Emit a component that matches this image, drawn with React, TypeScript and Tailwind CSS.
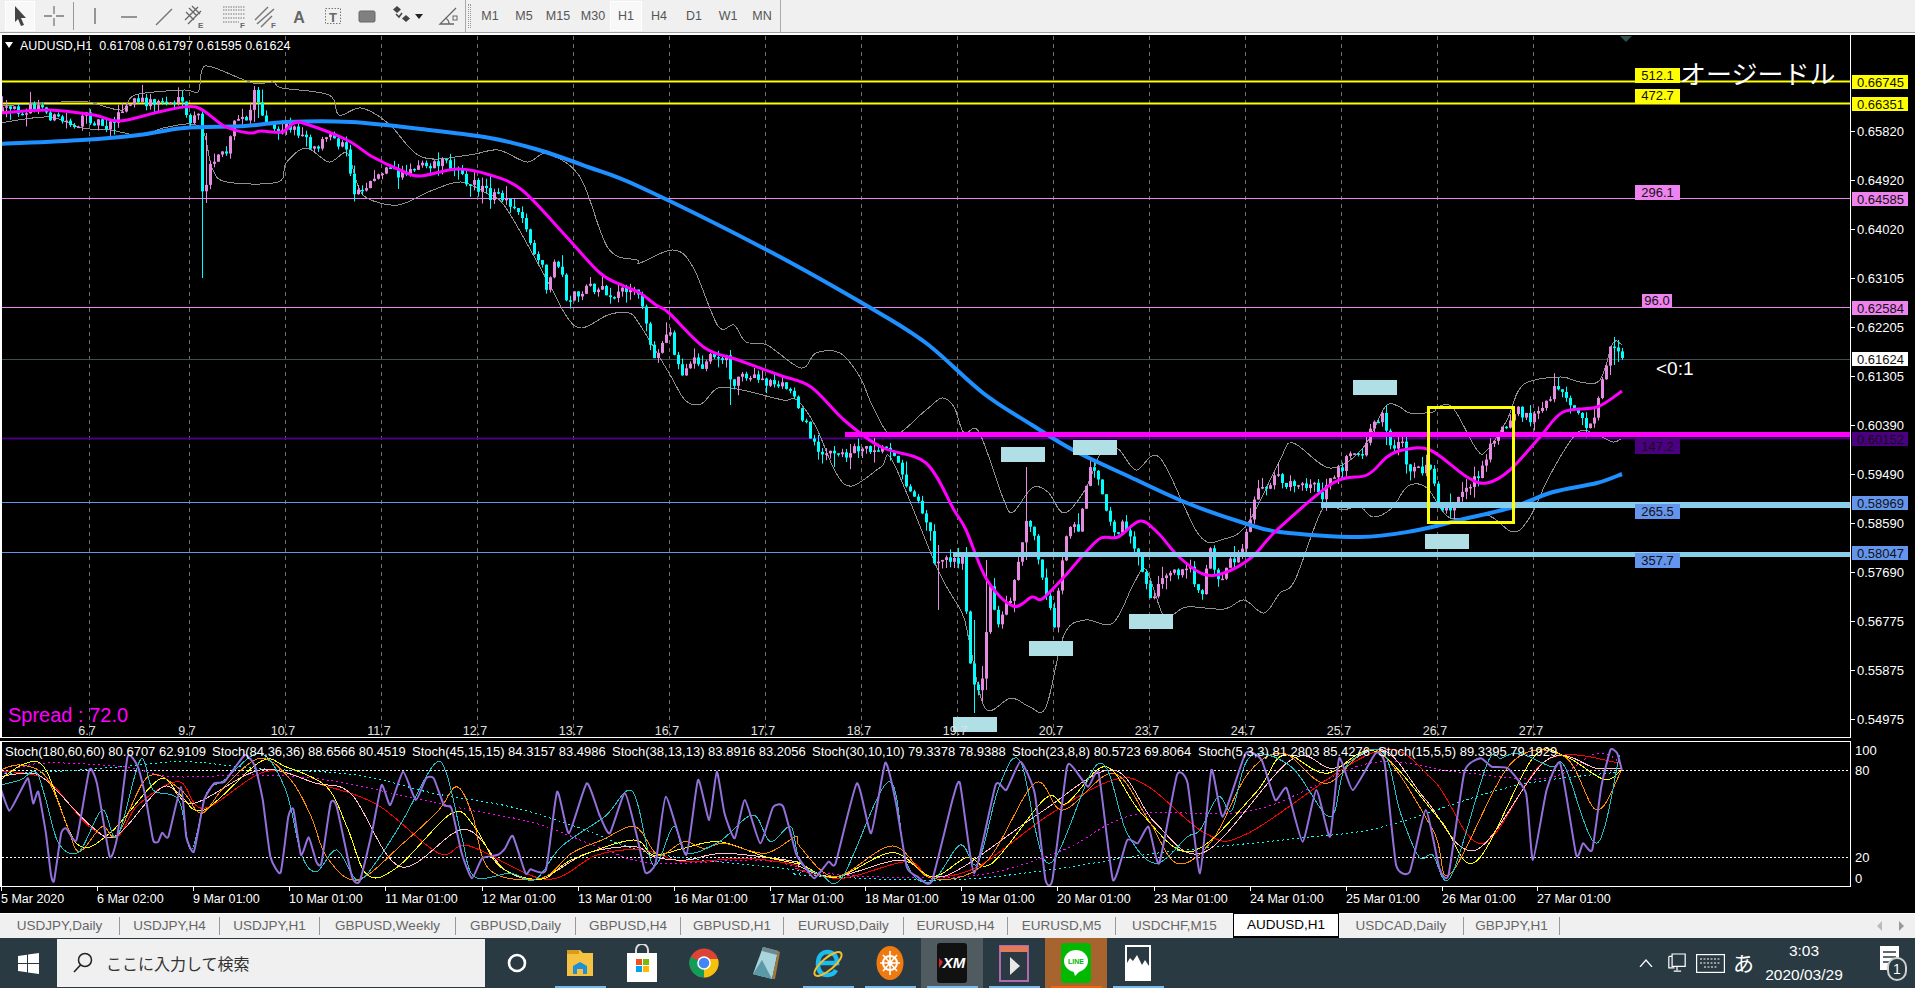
import React from "react";

type P = [number, number];
const z3 = (a: number[]): P[] => { const r: P[] = []; for (let i = 0; i < a.length; i += 2) r.push([a[i] / 1.96, 720 + a[i + 1] / 3]); return r; };
const z4 = (a: number[]): P[] => { const r: P[] = []; for (let i = 0; i < a.length; i += 2) r.push([800 + a[i] / 1.406, 720 + a[i + 1] / 3]); return r; };
const z8 = (a: number[]): P[] => { const r: P[] = []; for (let i = 0; i < a.length; i += 2) r.push([1200 + a[i] / 2.193, 730 + a[i + 1] / 3]); return r; };
const seq = (a: number[]): P[] => { const r: P[] = []; for (let i = 0; i < a.length; i += 2) r.push([a[i], a[i + 1]]); return r; };

const smooth = (p: P[], k = 6) => {
  let d = `M${p[0][0].toFixed(1)} ${p[0][1].toFixed(1)}`;
  for (let i = 0; i < p.length - 1; i++) {
    const a = p[Math.max(0, i - 1)], b = p[i], c = p[i + 1], e = p[Math.min(p.length - 1, i + 2)];
    const c1: P = [b[0] + (c[0] - a[0]) / k, b[1] + (c[1] - a[1]) / k];
    const c2: P = [c[0] - (e[0] - b[0]) / k, c[1] - (e[1] - b[1]) / k];
    d += `C${c1[0].toFixed(1)} ${c1[1].toFixed(1)} ${c2[0].toFixed(1)} ${c2[1].toFixed(1)} ${c[0].toFixed(1)} ${c[1].toFixed(1)}`;
  }
  return d;
};

const pricePath: P[] = seq([0,112,40,107,53,118,78,125,86,117,106,125,122,112,131,102,180,102,188,122,198,117,202,193,212,163,227,150,231,127,249,118,254,92,258,103,265,120,278,130,286,120,298,137,314,147,331,137,347,152,353,190,367,185,384,173,408,172,420,165,449,163,465,180,490,195,514,203,527,227,533,257,543,270,547,297,555,257,565,287,567,320,571,297,588,287,612,293,640,293,652,360,669,327,681,383,693,357,703,373,709,357,726,360,730,383,746,373,762,383,779,383,795,397,811,440,824,453,840,457,856,447,877,447,893,447,901,477,918,497,930,533,934,560,950,560,962,560,969,650,973,687,983,683,989,583,997,623,1009,600,1018,567,1024,523,1034,537,1042,577,1054,627,1060,567,1069,527,1079,527,1085,483,1091,470,1099,483,1107,510,1115,537,1122,517,1134,547,1150,600,1160,583,1187,567,1205,597,1207,537,1218,580,1228,563,1238,560,1250,517,1260,487,1277,477,1297,490,1313,483,1322,497,1333,477,1347,460,1365,450,1370,430,1382,415,1390,447,1402,447,1405,467,1427,468,1437,483,1438,503,1450,510,1457,497,1467,487,1473,480,1487,460,1493,437,1507,423,1517,407,1530,423,1543,407,1557,387,1567,400,1578,410,1588,433,1593,417,1602,377,1608,352,1613,345,1622,358]);
const maPink: P[] = seq([0,113,49,110,94,115,120,121,163,111,196,107,224,126,249,133,261,131,282,132,294,123,306,124,347,140,371,156,400,170,420,176,457,169,490,175,522,190,563,233,600,273,624,286,640,293,656,305,669,313,705,348,738,360,779,375,811,387,844,420,881,447,926,463,954,510,966,530,987,580,1013,606,1032,597,1042,599,1064,577,1085,553,1101,538,1118,537,1140,521,1158,533,1179,557,1203,574,1224,573,1252,557,1277,530,1333,483,1367,475,1387,457,1403,450,1430,450,1467,477,1487,483,1510,470,1540,437,1563,412,1597,407,1622,391]);
const maBlue: P[] = seq([0,144,82,140,139,135,184,128,245,126,286,122,351,122,429,130,490,138,539,150,588,167,640,187,767,250,869,307,926,343,983,393,1032,425,1073,450,1130,477,1187,503,1244,523,1280,532,1360,537,1413,531,1460,520,1513,507,1553,492,1597,483,1622,474]);
const bbUp: P[] = seq([0,106,61,102,88,102,122,110,135,95,184,90,198,92,202,70,212,67,253,83,273,82,282,88,329,95,339,115,361,108,388,123,422,157,469,155,498,150,527,162,547,154,580,177,608,248,637,260,640,263,673,250,693,267,718,326,734,325,746,342,767,345,801,368,816,353,840,353,860,377,873,407,893,435,926,410,942,398,954,407,964,433,979,432,1003,498,1013,512,1032,488,1048,492,1064,513,1085,490,1101,453,1118,449,1136,470,1160,458,1199,535,1224,539,1248,523,1280,460,1293,443,1330,468,1363,448,1385,407,1398,406,1410,413,1433,412,1438,407,1453,408,1477,450,1487,450,1507,420,1523,385,1560,377,1580,382,1600,380,1613,343,1622,345]);
const bbLo: P[] = seq([0,123,49,117,82,128,110,130,143,136,163,128,200,127,212,168,227,182,278,182,286,163,306,148,329,162,347,153,357,183,367,198,398,205,433,190,461,182,486,193,506,208,547,280,567,317,582,328,608,315,629,313,640,325,669,373,685,400,701,404,718,388,742,390,783,400,797,400,816,427,836,473,852,486,881,467,893,462,938,570,962,613,969,640,985,708,1011,698,1030,707,1046,707,1064,635,1085,620,1113,623,1134,583,1146,570,1162,613,1171,616,1187,607,1224,609,1244,600,1264,613,1280,593,1295,580,1323,508,1342,510,1360,507,1373,517,1392,508,1408,486,1427,488,1450,518,1487,515,1513,532,1530,517,1550,475,1577,433,1597,435,1613,442,1621,439]);

const interp = (p: P[], x: number) => {
  for (let i = 0; i < p.length - 1; i++) if (x >= p[i][0] && x <= p[i + 1][0]) {
    const d = p[i + 1][0] - p[i][0];
    return d === 0 ? p[i + 1][1] : p[i][1] + ((x - p[i][0]) / d) * (p[i + 1][1] - p[i][1]);
  }
  return p[p.length - 1][1];
};
let seed = 12345;
const rnd = () => { seed = (seed * 16807) % 2147483647; return seed / 2147483647; };
const wickOver: Record<number, [number, number]> = {
  202: [111, 278], 206: [133, 203], 254: [86, 122], 258: [87, 118], 730: [350, 405], 938: [545, 610], 974: [620, 713], 986: [560, 690], 1026: [467, 560], 1386: [405, 445], 1618: [340, 362], 1622: [348, 360], 1614: [337, 365],
};
type C = { x: number; o: number; c: number; h: number; l: number };
const candles: C[] = (() => {
  const out: C[] = [];
  let prev = 112;
  for (let i = 0; i <= 405; i++) {
    const x = 2 + 4 * i;
    const base = interp(pricePath, x);
    const c = i === 405 ? 358 : base + (rnd() - 0.5) * 11;
    const o = prev;
    const over = wickOver[x];
    const h = over ? over[0] : Math.min(o, c) - rnd() * rnd() * 14;
    const l = over ? over[1] : Math.max(o, c) + rnd() * rnd() * 14;
    out.push({ x, o, c, h, l });
    prev = c;
  }
  return out;
})();

const purple: P[] = [...z3([0,200,18,272,38,220,55,175,65,250,75,215,90,340,100,465,106,482,120,340,130,325,150,360,175,150,190,190,215,410,230,350,250,110,270,140,285,230,300,360,310,365,318,338,330,350,355,200,365,350,380,395,400,240,420,190,440,185,480,105,500,140,515,240,530,410,550,458,565,290,575,268,590,405,605,352,620,425,630,430,648,250,660,260,690,470,705,483,730,330,748,195,765,255,790,155,815,240,835,175,850,175,870,255,885,265,905,400,925,475,945,415,975,405,990,385,1005,348,1030,460,1040,448,1070,450,1092,215,1115,340,1150,190,1175,285,1195,340,1225,220,1250,360,1265,458,1285,430,1305,230,1345,405,1368,180,1390,300,1405,155,1420,280,1440,355,1460,240,1490,370,1515,262,1535,260,1560,400]),
  ...z4([0,420,20,475,40,425,50,430,80,190,100,340,120,128,135,250,150,440,165,470,185,485,215,235,225,190,245,460,275,195,290,210,310,125,330,220,345,478,355,478,375,145,385,145,405,200,420,160,440,480,460,360,475,370,490,320,505,430,530,165,545,190]),
  ...z8([0,430,25,120,50,260,100,70,135,90,165,210,190,175,225,335,255,180,285,320,305,85,335,180,385,70,405,100,430,405,460,425,495,240,525,415,545,435,580,125,615,85,640,110,675,115,715,190,730,390,760,180,790,100,825,375,840,340,860,360,880,170,900,60,915,70,925,120])];
const cyan: P[] = [...z3([0,195,40,180,70,155,90,240,115,370,155,395,200,270,230,350,275,120,300,210,350,240,375,390,405,220,440,180,510,100,560,210,590,400,620,455,660,390,700,480,740,420,790,300,850,135,875,160,905,350,930,470,1000,460,1050,478,1100,380,1185,290,1240,215,1280,435,1320,320,1345,400,1410,365,1475,285,1510,365,1550,320]),
  ...z4([0,425,30,465,60,470,125,185,150,430,185,485,225,375,250,430,280,200,310,125,350,430,420,130,460,340,500,430,545,350]),
  ...z8([0,300,40,200,70,240,110,80,200,110,285,260,320,110,400,65,440,250,480,380,510,375,550,440,630,100,660,85,700,70,770,110,800,110,870,340,920,75])];
const orange: P[] = [...z3([0,150,40,135,90,170,130,310,155,395,200,320,230,345,290,170,355,210,395,280,440,200,510,115,570,180,610,290,640,410,700,480,790,370,860,270,895,200,925,280,960,450,1060,475,1120,400,1180,360,1245,320,1290,405,1340,365,1380,385,1420,370,1500,400,1560,350]),
  ...z4([0,380,50,470,130,378,185,475,260,430,330,190,370,270,440,160,490,300,530,430,580,360,630,160,680,100,740,190,810,90,890,330,915,460,1000,130,1075,110,1120,270,1155,150])];
const yellow: P[] = [...z3([0,180,50,130,90,150,150,370,215,340,310,180,350,220,400,270,510,125,560,140,640,200,680,320,720,465,780,440,885,280,930,320,980,440,1060,478,1120,420,1240,360,1280,405,1340,385,1410,365,1500,410,1560,430]),
  ...z4([0,430,50,472,130,398,185,470,235,412,270,430,345,235,375,250,430,140,480,280,550,395,640,220,680,105,740,160,810,95,900,300,950,425,1030,115,1075,108,1130,178,1155,150])];
const pink: P[] = [...z3([0,170,50,160,90,180,180,320,230,345,320,200,380,250,510,150,620,190,690,225,785,440,910,328,990,450,1060,475,1150,400,1245,380,1280,410,1345,420,1420,400,1560,425]),
  ...z4([0,440,50,470,140,420,185,470,230,440,340,275,440,150,500,310,570,395,690,120,750,145,820,90,880,240,950,390,1050,120,1120,145,1155,145])];
const red: P[] = [...z3([0,155,50,160,100,190,175,320,230,350,270,255,350,185,400,265,520,155,620,190,740,255,860,400,920,378,1070,478,1170,405,1260,390,1340,425,1460,415,1560,435]),
  ...z4([0,450,60,475,150,425,185,470,250,440,350,285,440,180,490,200,570,340,630,340,810,95,890,180,960,370,1050,120,1155,130])];
const dashMag: P[] = [...z3([0,165,80,130,240,140,340,170,500,165,640,180,800,230,920,270,1050,310,1180,385,1280,430,1480,420,1560,440]),
  ...z4([0,450,100,470,250,465,370,390,470,285,640,270,800,130,920,155,1050,175,1120,100,1155,130])];
const dashCyan: P[] = [...z3([0,160,100,155,240,140,360,125,500,145,700,165,850,220,1000,260,1130,320,1280,400,1560,450]),
  ...z4([0,465,200,480,350,450,500,400,700,355,820,320,1000,200,1155,155])];

const verticals = [89, 189, 285, 381, 477, 573, 669, 765, 861, 957, 1053, 1149, 1245, 1341, 1437, 1533];
const dayLabels = ["6.7", "9.7", "10.7", "11.7", "12.7", "13.7", "16.7", "17.7", "18.7", "19.7", "20.7", "23.7", "24.7", "25.7", "26.7", "27.7"];
const axisTicks: [string, number][] = [["0.65820", 131], ["0.64920", 180], ["0.64020", 229], ["0.63105", 278], ["0.62205", 327], ["0.61305", 376], ["0.60390", 425], ["0.59490", 474], ["0.58590", 523], ["0.57690", 572], ["0.56775", 621], ["0.55875", 670], ["0.54975", 719]];
const axisBoxes: [string, number, string][] = [["0.66745", 82, "#ffff00"], ["0.66351", 104, "#ffff00"], ["0.64585", 199, "#ee82ee"], ["0.62584", 308, "#ee82ee"], ["0.61624", 359, "#ffffff"], ["0.60152", 439, "#4b0082"], ["0.58969", 503, "#6495ed"], ["0.58047", 553, "#6495ed"]];
const chartBoxes: [string, number, number, number, number, string][] = [["512.1", 1635, 68, 45, 15, "#ffff00"], ["472.7", 1635, 89, 45, 14, "#ffff00"], ["296.1", 1635, 185, 45, 15, "#ee82ee"], ["96.0", 1642, 294, 30, 14, "#ee82ee"], ["147.2", 1635, 439, 45, 15, "#4b0082"], ["265.5", 1635, 504, 45, 15, "#6495ed"], ["357.7", 1635, 553, 45, 15, "#6495ed"]];
const paleBoxes: P[] = [[1001, 447], [1073, 440], [1129, 614], [1029, 641], [953, 717], [1353, 380], [1425, 534]];
const hLines: [number, string, number][] = [[81, "#ffff00", 2], [103, "#ffff00", 2], [198, "#ee82ee", 1], [307, "#ee82ee", 1], [359, "#3d5050", 1], [438, "#4b0082", 2], [502, "#6495ed", 1], [552, "#6495ed", 1]];
const stochHead: [number, string][] = [[5, "Stoch(180,60,60) 80.6707 62.9109"], [212, "Stoch(84,36,36) 88.6566 80.4519"], [412, "Stoch(45,15,15) 84.3157 83.4986"], [612, "Stoch(38,13,13) 83.8916 83.2056"], [812, "Stoch(30,10,10) 79.3378 78.9388"], [1012, "Stoch(23,8,8) 80.5723 69.8064"], [1198, "Stoch(5,3,3) 81.2803 85.4276"], [1378, "Stoch(15,5,5) 89.3395 79.1929"]];
const timeLabels: [number, string][] = [[0, "5 Mar 2020"], [96, "6 Mar 02:00"], [192, "9 Mar 01:00"], [288, "10 Mar 01:00"], [384, "11 Mar 01:00"], [481, "12 Mar 01:00"], [577, "13 Mar 01:00"], [673, "16 Mar 01:00"], [769, "17 Mar 01:00"], [864, "18 Mar 01:00"], [960, "19 Mar 01:00"], [1056, "20 Mar 01:00"], [1153, "23 Mar 01:00"], [1249, "24 Mar 01:00"], [1345, "25 Mar 01:00"], [1441, "26 Mar 01:00"], [1536, "27 Mar 01:00"]];

function MainChart() {
  return (
    <svg width={1915} height={703} viewBox="0 35 1915 703" className="block flex-none" fontFamily="'Liberation Sans', 'Noto Sans CJK JP', sans-serif">
      <rect x={0} y={35} width={1915} height={703} fill="#000" />
      {verticals.map((x) => <line key={x} x1={x + 0.5} x2={x + 0.5} y1={36} y2={738} stroke="#6e6e6e" strokeDasharray="4 4" />)}
      <polygon points="1620,36 1632,36 1626,42" fill="#2f5050" />
      {hLines.map(([y, c, w]) => <line key={y} x1={2} x2={1851} y1={y + 0.5} y2={y + 0.5} stroke={c} strokeWidth={w} />)}
      <path d={smooth(bbUp)} fill="none" stroke="#909090" strokeWidth={1} shapeRendering="crispEdges" />
      <path d={smooth(bbLo)} fill="none" stroke="#909090" strokeWidth={1} shapeRendering="crispEdges" />
      {candles.map((k) => {
        const up = k.c < k.o;
        const col = up ? "#e58be0" : "#00ffff";
        const top = Math.min(k.o, k.c);
        const h = Math.max(1.5, Math.abs(k.o - k.c));
        return (
          <g key={k.x}>
            <rect x={k.x} y={k.h} width={1} height={k.l - k.h} fill={col} />
            <rect x={k.x - 1} y={top} width={3} height={h} fill={col} />
          </g>
        );
      })}
      <path d={smooth(maBlue)} fill="none" stroke="#1e90ff" strokeWidth={4} />
      <path d={smooth(maPink)} fill="none" stroke="#ff00ff" strokeWidth={3} />
      <rect x={845} y={432} width={1006} height={5} fill="#ff00ff" />
      <rect x={1321} y={502} width={530} height={6} fill="#87ceeb" />
      <rect x={953} y={552} width={898} height={5} fill="#87ceeb" />
      <rect x={1428.5} y={407.5} width={85} height={115} fill="none" stroke="#ffff00" strokeWidth={3} />
      {paleBoxes.map(([x, y]) => <rect key={x} x={x} y={y} width={44} height={15} fill="#b0e0e6" />)}
      {chartBoxes.map(([t, x, y, w, h, c]) => (
        <g key={t}>
          <rect x={x} y={y} width={w} height={h} fill={c} />
          <text x={x + w / 2} y={y + h - 3} textAnchor="middle" fontSize={13} fill="#111">{t}</text>
        </g>
      ))}
      <polygon points="5,42 13,42 9,48" fill="#fff" />
      <text x={20} y={50} fontSize={12.5} fill="#fff" xmlSpace="preserve">AUDUSD,H1  0.61708 0.61797 0.61595 0.61624</text>
      <text x={1680} y={84} fontSize={26} fill="#fff">オージードル</text>
      <text x={1656} y={375} fontSize={19} fill="#fff">&lt;0:1</text>
      <text x={8} y={722} fontSize={20} fill="#ff00ff">Spread : 72.0</text>
      {dayLabels.map((t, i) => <text key={t} x={verticals[i] - 2} y={735} textAnchor="middle" fontSize={12.5} fill="#e0e0e0">{t}</text>)}
      <rect x={0} y={35} width={2} height={703} fill="#fff" />
      <rect x={1850} y={35} width={1} height={703} fill="#fff" />
      <rect x={0} y={737} width={1851} height={1} fill="#fff" />
      {axisTicks.map(([t, y]) => (
        <g key={t}>
          <rect x={1851} y={y} width={4} height={1} fill="#fff" />
          <text x={1857} y={y + 5} fontSize={13} fill="#fff">{t}</text>
        </g>
      ))}
      {axisBoxes.map(([t, y, c]) => (
        <g key={t}>
          <rect x={1852} y={y - 7} width={56} height={14} fill={c} />
          <text x={1857} y={y + 5} fontSize={13} fill="#111">{t}</text>
        </g>
      ))}
    </svg>
  );
}

function StochChart() {
  return (
    <svg width={1915} height={146} viewBox="0 741 1915 146" className="block flex-none" fontFamily="'Liberation Sans', sans-serif">
      <rect x={0} y={741} width={1915} height={146} fill="#000" />
      <line x1={2} x2={1850} y1={770.5} y2={770.5} stroke="#fff" strokeDasharray="2 2" />
      <line x1={2} x2={1850} y1={857.5} y2={857.5} stroke="#fff" strokeDasharray="2 2" />
      <g fill="none" shapeRendering="crispEdges">
        <path d={smooth(dashCyan)} stroke="#00ffff" strokeDasharray="2 3" />
        <path d={smooth(dashMag)} stroke="#ff00ff" strokeDasharray="2 3" />
        <path d={smooth(red)} stroke="#ff0000" />
        <path d={smooth(pink)} stroke="#ffc0cb" />
        <path d={smooth(yellow)} stroke="#ffff00" />
        <path d={smooth(orange)} stroke="#ff8c00" />
        <path d={smooth(cyan)} stroke="#20c0c8" />
      </g>
      <path d={smooth(purple, 12)} fill="none" stroke="#9370db" strokeWidth={2} />
      {stochHead.map(([x, t]) => <text key={x} x={x} y={756} fontSize={13} fill="#fff">{t}</text>)}
      <rect x={0} y={741} width={1851} height={1} fill="#fff" />
      <rect x={0} y={741} width={2} height={146} fill="#fff" />
      <rect x={1850} y={741} width={1} height={146} fill="#fff" />
      <rect x={0} y={886} width={1851} height={1} fill="#fff" />
      <text x={1855} y={755} fontSize={13} fill="#fff">100</text>
      <text x={1855} y={775} fontSize={13} fill="#fff">80</text>
      <text x={1855} y={862} fontSize={13} fill="#fff">20</text>
      <text x={1855} y={883} fontSize={13} fill="#fff">0</text>
    </svg>
  );
}

function TimeAxis() {
  return (
    <svg width={1915} height={26} viewBox="0 887 1915 26" className="block flex-none" fontFamily="'Liberation Sans', sans-serif">
      <rect x={0} y={887} width={1915} height={26} fill="#000" />
      {timeLabels.map(([x, t]) => (
        <g key={x}>
          <rect x={x + 1} y={887} width={1} height={4} fill="#fff" />
          <text x={x + 1} y={903} fontSize={12.5} fill="#fff">{t}</text>
        </g>
      ))}
    </svg>
  );
}

const tools: { cls: string; el: React.ReactNode }[] = [
  { cls: "ml-[6px]", el: <line x1="15" y1="7" x2="15" y2="23" stroke="#777" strokeWidth="1.5" /> },
  { cls: "ml-[4px]", el: <line x1="7" y1="16" x2="23" y2="16" stroke="#777" strokeWidth="1.5" /> },
  { cls: "ml-[5px]", el: <line x1="7" y1="24" x2="23" y2="8" stroke="#777" strokeWidth="1.5" /> },
  { cls: "ml-[2px]", el: <g stroke="#666" strokeWidth="1.3" fill="none"><path d="M4 19L17 6M7 23L20 10M8 7l8 8M5 11l8 8M11 5l8 8" /><text x="17" y="27" fontSize="8" fontWeight="700" fill="#666" stroke="none" fontFamily="Liberation Sans">E</text></g> },
  { cls: "ml-[8px]", el: <g stroke="#777" strokeWidth="1"><g strokeDasharray="1.5 1"><line x1="4" y1="6" x2="26" y2="6" /><line x1="4" y1="9" x2="26" y2="9" /><line x1="4" y1="13" x2="26" y2="13" /><line x1="4" y1="17" x2="26" y2="17" /><line x1="4" y1="21" x2="20" y2="21" /></g><text x="21" y="27" fontSize="8" fontWeight="700" fill="#666" stroke="none" fontFamily="Liberation Sans">F</text></g> },
  { cls: "ml-[1px]", el: <g stroke="#777" strokeWidth="1.5"><line x1="5" y1="19" x2="18" y2="6" /><line x1="7" y1="23" x2="24" y2="8" /><line x1="11" y1="26" x2="22" y2="15" /><text x="21" y="27" fontSize="8" fontWeight="700" fill="#666" stroke="none" fontFamily="Liberation Sans">F</text></g> },
  { cls: "ml-[4px]", el: <text x="15" y="22" textAnchor="middle" fontSize="16" fontWeight="700" fill="#666" fontFamily="Liberation Sans">A</text> },
  { cls: "ml-[4px]", el: <g><rect x="7.5" y="7.5" width="15" height="15" fill="none" stroke="#777" strokeDasharray="1.5 1.5" /><text x="15" y="21" textAnchor="middle" fontSize="13" fontWeight="700" fill="#666" fontFamily="Liberation Sans">T</text></g> },
  { cls: "ml-[4px]", el: <rect x="7" y="10" width="16" height="11" rx="1.5" fill="#808080" stroke="#666" /> },
  { cls: "ml-[2px]", el: <g fill="#444"><path d="M13 5l4 3.500-4 3.500-4-3.500zM22 14l4 3.500-4 3.500-4-3.500z" /><path d="M12 13l3 3 3-4" stroke="#444" strokeWidth="1.5" fill="none" /></g> },
];
const frames: [string, string][] = [["M1", "w-[34px]"], ["M5", "w-[34px]"], ["M15", "w-[34px]"], ["M30", "w-[35px] pl-px"], ["H1", "w-[32px] bg-[#f8f8f8] border border-white"], ["H4", "w-[34px]"], ["D1", "w-[35px] pl-px"], ["W1", "w-[34px]"], ["MN", "w-[34px]"]];

function Toolbar() {
  return (
    <div className="h-[35px] flex-none bg-white">
      <div className="h-[33px] bg-[#f0f0f0] border-b border-[#a0a0a0] flex items-center">
        <div className="ml-[5px] w-[30px] h-[30px] flex items-center justify-center bg-[#f8f8f8] border border-white">
          <svg width="18" height="24" viewBox="0 0 18 24"><path d="M4 2l11 12h-5l3 7-3 1-3-7-3 3z" fill="#444" /></svg>
        </div>
        <div className="w-[38px] flex justify-center">
          <svg width="22" height="22" viewBox="0 0 22 22"><path d="M11 1v8M11 13v8M1 11h8M13 11h8" stroke="#777" strokeWidth="1.3" /></svg>
        </div>
        <div className="w-px h-[28px] bg-[#999]" />
        {tools.map((t, i) => (
          <div key={i} className={`w-[30px] h-[30px] flex-none ${t.cls}`}>
            <svg width="30" height="30" viewBox="0 0 30 30">{t.el}</svg>
          </div>
        ))}
        <div className="w-[10px] flex justify-center">
          <svg width="8" height="5" viewBox="0 0 8 5"><path d="M0 0h8L4 5z" fill="#222" /></svg>
        </div>
        <div className="ml-[8px] w-[30px] h-[30px] flex-none">
          <svg width="30" height="30" viewBox="0 0 30 30"><path d="M24 7L8 23h14M17 23c0-3-1-5-4-6" fill="none" stroke="#666" strokeWidth="1.3" /><rect x="21" y="15" width="4" height="4" fill="none" stroke="#666" /></svg>
        </div>
        <div className="ml-[3px] w-px h-[32px] bg-[#aaa]" />
        <div className="ml-[2px] w-[3px] h-[24px] border-x border-dotted border-[#999]" />
        <div className="ml-[2px] flex items-center h-full">
          {frames.map(([t, c]) => (
            <div key={t} className={`h-[30px] flex items-center justify-center text-[12.5px] text-[#555] ${c}`}>{t}</div>
          ))}
        </div>
        <div className="ml-px w-px h-full bg-[#aaa]" />
      </div>
    </div>
  );
}

const tabs: [string, string][] = [["USDJPY,Daily", "w-[120px]"], ["USDJPY,H4", "w-[100px]"], ["USDJPY,H1", "w-[100px]"], ["GBPUSD,Weekly", "w-[136px]"], ["GBPUSD,Daily", "w-[120px]"], ["GBPUSD,H4", "w-[105px]"], ["GBPUSD,H1", "w-[103px]"], ["EURUSD,Daily", "w-[120px]"], ["EURUSD,H4", "w-[104px]"], ["EURUSD,M5", "w-[108px]"], ["USDCHF,M15", "w-[117px] border-r-0"]];

function Tabs() {
  return (
    <div className="h-[25px] flex-none bg-[#f0f0f0] border-t border-white flex items-stretch text-[13.5px] text-[#666]">
      {tabs.map(([t, c]) => (
        <div key={t} className={`flex items-center justify-center my-[3px] border-r border-[#999] ${c}`}>{t}</div>
      ))}
      <div className="w-[106px] -mt-px bg-white border border-black border-b-2 flex items-center justify-center text-black">AUDUSD,H1</div>
      <div className="w-[125px] my-[3px] border-r border-[#999] flex items-center justify-center">USDCAD,Daily</div>
      <div className="w-[96px] my-[3px] border-r border-[#999] flex items-center justify-center">GBPJPY,H1</div>
      <div className="flex-1 flex items-center justify-end gap-[15px] pr-[11px]">
        <svg width="6" height="10" viewBox="0 0 6 10"><path d="M5 0v10L0 5z" fill="#bbb" /></svg>
        <svg width="6" height="10" viewBox="0 0 6 10"><path d="M1 0v10l5-5z" fill="#999" /></svg>
      </div>
    </div>
  );
}

const TaskIcons: { bg: string; bar: string; el: React.ReactNode }[] = [
  { bg: "", bar: "bg-[#76b9ed]", el: (
    <svg width="30" height="30" viewBox="0 0 30 30"><path d="M2 2h13l3 3h10v23H2z" fill="#f5c242" /><rect x="2" y="2" width="12" height="4" fill="#d99b1e" /><path d="M8 26v-8l7-4 7 4v8h-4v-5h-6v5z" fill="#1f8fd8" /></svg>) },
  { bg: "", bar: "", el: (
    <svg width="30" height="38" viewBox="0 0 30 38"><path d="M9 10V6a6 6 0 0 1 12 0v4" fill="none" stroke="#ddd" strokeWidth="2" /><rect y="9" width="30" height="29" fill="#fff" /><rect x="9" y="15" width="6" height="6" fill="#f25022" /><rect x="16" y="15" width="6" height="6" fill="#7fba00" /><rect x="9" y="22" width="6" height="6" fill="#00a4ef" /><rect x="16" y="22" width="6" height="6" fill="#ffb900" /></svg>) },
  { bg: "", bar: "", el: (
    <svg width="30" height="38" viewBox="0 0 30 38"><g transform="translate(0 4)"><circle cx="15" cy="15" r="14.5" fill="#db4437" /><path d="M15 15L2.4 22.3A14.5 14.5 0 0 0 15 29.5z" fill="#0f9d58" /><path d="M2.4 22.3A14.5 14.5 0 0 1 1.5 9L15 15z" fill="#0f9d58" /><path d="M15 29.5A14.5 14.5 0 0 0 29 11H15z" fill="#f4c20d" /><circle cx="15" cy="15" r="6.8" fill="#fff" /><circle cx="15" cy="15" r="5.3" fill="#4285f4" /></g></svg>) },
  { bg: "", bar: "", el: (
    <svg width="30" height="38" viewBox="0 0 30 38"><path d="M12 3l15 4-6 28L2 30z" fill="#a8d4dc" /><path d="M2 30l9-14 10 19z" fill="#5a9aa8" /><path d="M12 3l15 4-1 4-15-4z" fill="#6d8a92" /><path d="M21 35l6-28 2 1-5 27z" fill="#a07a3c" /></svg>) },
  { bg: "", bar: "bg-[#76b9ed]", el: (
    <svg width="32" height="38" viewBox="0 0 32 38"><path d="M6 19h19c0-7-4-11-9.500-11S6 12 6 20s4 11 9.500 11c4 0 7-2 8.500-5" fill="none" stroke="#1ebbee" strokeWidth="4.5" /><ellipse cx="16" cy="20" rx="17" ry="6" transform="rotate(-40 16 20)" fill="none" stroke="#f0c030" strokeWidth="2" /></svg>) },
  { bg: "", bar: "bg-[#76b9ed]", el: (
    <svg width="30" height="38" viewBox="0 0 30 38"><ellipse cx="15" cy="19" rx="13.5" ry="17" fill="#ee7a10" /><circle cx="15" cy="19" r="7" fill="none" stroke="#fff" strokeWidth="2" /><circle cx="15" cy="19" r="2.500" fill="#fff" /><path d="M15 7v24M5 19h20M8 11l14 16M22 11L8 27" stroke="#fff" strokeWidth="1.6" /></svg>) },
  { bg: "bg-[#4f5b5f]", bar: "bg-[#76b9ed]", el: (
    <svg width="30" height="40" viewBox="0 0 30 40"><rect width="30" height="40" rx="3" fill="#111" /><path d="M2 15l4 4-4 6z" fill="#e02020" /><text x="17" y="25" textAnchor="middle" fontSize="15" fontWeight="700" fontStyle="italic" fill="#fff" fontFamily="Liberation Sans">XM</text></svg>) },
  { bg: "", bar: "bg-[#76b9ed]", el: (
    <svg width="30" height="38" viewBox="0 0 30 38"><rect x="1" y="2" width="28" height="35" fill="#2b3a42" stroke="#b06ab0" strokeWidth="2" /><rect x="1" y="2" width="28" height="6" fill="#e07a5a" /><path d="M11 13l10 9-10 9z" fill="#e8e8e8" /></svg>) },
  { bg: "bg-[#a8642e]", bar: "bg-[#f7630c]", el: (
    <svg width="30" height="40" viewBox="0 0 30 40"><rect width="30" height="40" rx="4" fill="#00b900" /><ellipse cx="15" cy="18" rx="12" ry="11" fill="#fff" /><path d="M12 27l2 6 6-6z" fill="#fff" /><text x="15" y="21" textAnchor="middle" fontSize="7" fontWeight="700" fill="#00b900" fontFamily="Liberation Sans">LINE</text></svg>) },
  { bg: "", bar: "bg-[#76b9ed]", el: (
    <svg width="26" height="36" viewBox="0 0 26 36"><rect width="26" height="36" fill="#fff" /><path d="M2 2h22v19l-4-6-3 5-5-10-4 6-3-3-3 5z" fill="#2b3a42" /></svg>) },
];

function Taskbar() {
  return (
    <div className="h-[50px] flex-none bg-[#2a3a42] flex items-stretch relative">
      <div className="w-[56px] flex items-center justify-center">
        <svg width="21" height="21" viewBox="0 0 21 21" fill="#fff"><path d="M0 3l9-1.300V10H0zM10 1.500L21 0v10H10zM0 11h9v8.300L0 18zM10 11h11v10l-11-1.500z" /></svg>
      </div>
      <div className="w-[428px] my-px ml-px bg-[#f0f0f0] flex items-center">
        <svg className="ml-[15px]" width="22" height="24" viewBox="0 0 22 24"><circle cx="13" cy="9" r="6.5" fill="none" stroke="#222" strokeWidth="1.5" /><line x1="8.5" y1="14" x2="2" y2="21" stroke="#222" strokeWidth="1.6" /></svg>
        <span className="ml-[12px] text-[16px] text-[#333] font-['Noto_Sans_CJK_JP',sans-serif]">ここに入力して検索</span>
      </div>
      <div className="w-[64px] flex items-center justify-center">
        <svg width="20" height="20" viewBox="0 0 20 20"><circle cx="10" cy="10" r="8" fill="none" stroke="#fff" strokeWidth="2.6" /></svg>
      </div>
      {TaskIcons.map((t, i) => (
        <div key={i} className={`w-[62px] relative flex items-center justify-center ${t.bg}`}>
          {t.el}
          {t.bar ? <div className={`absolute bottom-0 left-[6px] right-[5px] h-[2px] ${t.bar}`} /> : null}
        </div>
      ))}
      <div className="flex-1 flex items-center text-white">
        <svg className="ml-[470px]" width="14" height="8" viewBox="0 0 14 8"><path d="M1 8l6-7 6 7" fill="none" stroke="#fff" strokeWidth="1.2" /></svg>
        <svg className="ml-[15px]" width="18" height="22" viewBox="0 0 22 24" fill="none" stroke="#fff" strokeWidth="1.5"><path d="M5 1h16v15H5zM1 4v14h7M1 4h4M11 16v5M7 22h9" /></svg>
        <svg className="ml-[10px]" width="29" height="19" viewBox="0 0 29 19" fill="none" stroke="#fff" strokeWidth="1.2"><rect x=".6" y=".6" width="27.8" height="17.8" /><path d="M4 5h21M4 9h21M8 13h13" strokeDasharray="2 1.5" /></svg>
        <span className="ml-[8px] text-[21px] font-['Noto_Sans_CJK_JP',sans-serif] w-[22px]">あ</span>
        <div className="ml-[9px] w-[80px] flex flex-col items-center text-[15.5px] leading-[20px] gap-[4px]">
          <span>3:03</span>
          <span>2020/03/29</span>
        </div>
        <div className="ml-[36px] relative w-[28px] h-[40px]">
          <svg className="absolute left-0 top-[3px]" width="20" height="24" viewBox="0 0 20 24"><path d="M0 0h19v24H0z" fill="#fff" /><path d="M3 6h13M3 11h13M3 16h9" stroke="#2a3a42" strokeWidth="1.5" /></svg>
          <div className="absolute left-[7px] top-[14px] w-[20px] h-[24px] rounded-full bg-[#2a3a42] border-2 border-[#cfcfcf] flex items-center justify-center text-[14px]">1</div>
        </div>
      </div>
    </div>
  );
}

export default function App() {
  return (
    <div className="w-[1915px] h-[988px] overflow-hidden flex flex-col bg-black font-['Liberation_Sans',sans-serif]">
      <Toolbar />
      <MainChart />
      <div className="h-[3px] flex-none bg-black" />
      <StochChart />
      <TimeAxis />
      <Tabs />
      <Taskbar />
    </div>
  );
}
